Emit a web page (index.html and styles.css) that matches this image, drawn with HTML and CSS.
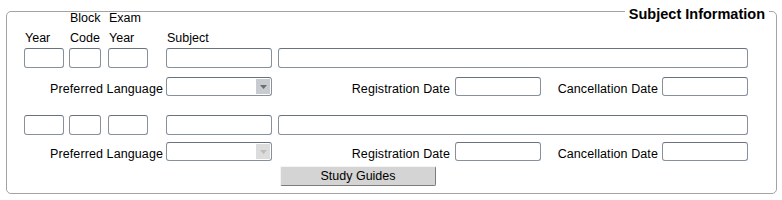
FILE: index.html
```html
<!DOCTYPE html>
<html lang="en">
<head>
    <meta charset="UTF-8">
    <title>Subject Information</title>
    <link rel="stylesheet" href="styles.css">
</head>
<body>

    <div class="frame">
        <div class="frame-title">Subject Information</div>

        <div class="heads">
            <span class="col col-year"></span>
            <span class="col col-code">Block</span>
            <span class="col col-exam">Exam</span>
        </div>
        <div class="heads heads-2">
            <span class="col col-year">Year</span>
            <span class="col col-code">Code</span>
            <span class="col col-exam">Year</span>
            <span class="col col-subj">Subject</span>
        </div>

        <!-- first subject -->
        <div class="fields">
            <input class="col col-year" type="text">
            <input class="col col-code" type="text">
            <input class="col col-exam" type="text">
            <input class="col col-subj" type="text">
            <input class="col col-desc" type="text">
        </div>
        <div class="details">
            <label class="lbl-lang">Preferred Language</label>
            <div class="combo">
                <span class="combo-btn">
                    <svg width="7" height="4" viewBox="0 0 7 4"><path d="M0 0h7L3.5 4z" fill="#6d6d6d"/></svg>
                </span>
            </div>
            <label class="lbl-reg">Registration Date</label>
            <input class="date" type="text">
            <label class="lbl-cancel">Cancellation Date</label>
            <input class="date" type="text">
        </div>

        <!-- second subject -->
        <div class="fields fields-2">
            <input class="col col-year" type="text">
            <input class="col col-code" type="text">
            <input class="col col-exam" type="text">
            <input class="col col-subj" type="text">
            <input class="col col-desc" type="text">
        </div>
        <div class="details details-2">
            <label class="lbl-lang">Preferred Language</label>
            <div class="combo disabled">
                <span class="combo-btn">
                    <svg width="7" height="4" viewBox="0 0 7 4"><path d="M0 0h7L3.5 4z" fill="#bdbdbd"/></svg>
                </span>
            </div>
            <label class="lbl-reg">Registration Date</label>
            <input class="date" type="text">
            <label class="lbl-cancel">Cancellation Date</label>
            <input class="date" type="text">
        </div>

        <div class="actions">
            <button type="button" class="btn">Study Guides</button>
        </div>
    </div>

</body>
</html>
```

FILE: styles.css
```css
body {
    margin: 0;
    font-family: "Liberation Sans", Arial, sans-serif;
    font-size: 12.5px;
    color: #000;
    background: #fff;
}

.frame {
    position: relative;
    box-sizing: border-box;
    width: 771px;
    height: 183px;
    margin: 11px 0 0 6px;
    border: 1px solid #a3a3a3;
    border-radius: 5px;
}

.frame-title {
    position: absolute;
    top: -6px;
    right: 7px;
    padding: 0 4px;
    background: #fff;
    font-weight: bold;
    font-size: 14.5px;
    line-height: 16px;
}

.heads {
    display: flex;
    height: 14px;
    line-height: 14px;
    margin-top: -1px;
}

.heads-2 {
    margin-top: 6px;
}

.heads .col {
    padding-left: 1px;
}

.col {
    box-sizing: border-box;
    flex: none;
}

.col-year {
    width: 40px;
    margin-left: 17px;
}

.col-code {
    width: 32px;
    margin-left: 5px;
}

.col-exam {
    width: 40px;
    margin-left: 7px;
}

.col-subj {
    width: 106px;
    margin-left: 18px;
}

.col-desc {
    width: 470px;
    margin-left: 6px;
}

input {
    box-sizing: border-box;
    margin: 0;
    padding: 0 2px;
    border: 1px solid #86919c;
    border-top-color: #68737e;
    border-radius: 3px;
    background: #fff;
    font: inherit;
}

.fields {
    display: flex;
    margin-top: 3px;
}

.fields input {
    height: 20px;
}

.fields-2 {
    margin-top: 19px;
}

.details {
    display: flex;
    align-items: center;
    height: 19px;
    margin-top: 9px;
}

.details-2 {
    margin-top: 7px;
}

.details label {
    flex: none;
    line-height: 14px;
    padding-top: 4px;
    text-align: right;
    letter-spacing: 0.1px;
}

.lbl-lang {
    width: 156px;
    margin-right: 3px;
}

.lbl-reg {
    width: 178px;
    margin-right: 5px;
}

.lbl-cancel {
    width: 117px;
    margin-right: 4px;
}

.date {
    width: 86px;
    height: 19px;
}

.combo {
    box-sizing: border-box;
    display: flex;
    justify-content: flex-end;
    width: 106px;
    height: 19px;
    border: 1px solid #86919c;
    border-top-color: #68737e;
    border-radius: 3px;
    background: #fff;
}

.combo-btn {
    display: flex;
    align-items: center;
    justify-content: center;
    width: 14px;
    margin: 1px;
    background: #c8cbcf;
}

.combo.disabled .combo-btn {
    background: #dcdcdc;
}

.actions {
    margin-top: 5px;
    padding-left: 273px;
}

.btn {
    box-sizing: border-box;
    width: 156px;
    height: 20px;
    padding: 0;
    border: 1px solid;
    border-color: #f4f4f4 #7c7c7c #7c7c7c #f4f4f4;
    border-radius: 2px;
    background: #d4d4d4;
    color: #000;
    font: inherit;
}
```
